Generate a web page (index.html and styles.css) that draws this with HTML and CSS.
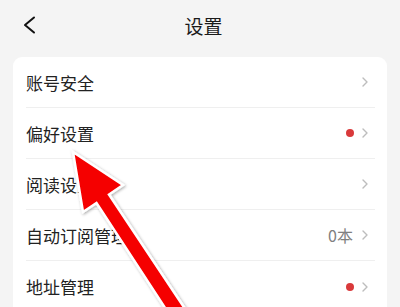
FILE: index.html
```html
<!DOCTYPE html>
<html lang="zh">
<head>
<meta charset="utf-8">
<link rel="stylesheet" href="styles.css">
</head>
<body>
<div class="page">
  <header class="header">
    <span class="back">
      <svg width="13" height="18" viewBox="0 0 13 18"><polyline points="11,1.5 2,9 11,16.5" fill="none" stroke="#111" stroke-width="2" stroke-linecap="round" stroke-linejoin="round"/></svg>
    </span>
    <h1 class="title">设置</h1>
    <span></span>
  </header>
  <section class="card">
    <div class="row"><span class="label">账号安全</span><span class="right"><svg class="chev" width="6" height="10" viewBox="0 0 6 10"><polyline points="1,1 5,5 1,9" fill="none" stroke="#bdbdbd" stroke-width="1.4" stroke-linecap="round" stroke-linejoin="round"/></svg></span></div>
    <div class="row"><span class="label">偏好设置</span><span class="right"><span class="dot"></span><svg class="chev" width="6" height="10" viewBox="0 0 6 10"><polyline points="1,1 5,5 1,9" fill="none" stroke="#bdbdbd" stroke-width="1.4" stroke-linecap="round" stroke-linejoin="round"/></svg></span></div>
    <div class="row"><span class="label">阅读设置</span><span class="right"><svg class="chev" width="6" height="10" viewBox="0 0 6 10"><polyline points="1,1 5,5 1,9" fill="none" stroke="#bdbdbd" stroke-width="1.4" stroke-linecap="round" stroke-linejoin="round"/></svg></span></div>
    <div class="row"><span class="label">自动订阅管理</span><span class="right"><span class="count">0本</span><svg class="chev" width="6" height="10" viewBox="0 0 6 10"><polyline points="1,1 5,5 1,9" fill="none" stroke="#bdbdbd" stroke-width="1.4" stroke-linecap="round" stroke-linejoin="round"/></svg></span></div>
    <div class="row"><span class="label">地址管理</span><span class="right"><span class="dot"></span><svg class="chev" width="6" height="10" viewBox="0 0 6 10"><polyline points="1,1 5,5 1,9" fill="none" stroke="#bdbdbd" stroke-width="1.4" stroke-linecap="round" stroke-linejoin="round"/></svg></span></div>
  </section>
  <svg class="arrow" width="400" height="307" viewBox="0 0 400 307">
    <defs>
      <filter id="sh" x="-20%" y="-20%" width="140%" height="140%">
        <feDropShadow dx="1" dy="1" stdDeviation="1.5" flood-color="#000" flood-opacity="0.35"/>
      </filter>
    </defs>
    <polygon points="73,152 123,185 109,194.5 184.5,308 171,317 96.5,203 83,212" fill="#f50000" stroke="#fff" stroke-width="2.5" stroke-linejoin="miter" filter="url(#sh)"/>
  </svg>
</div>
</body>
</html>
```

FILE: styles.css
```css
* { box-sizing: border-box; }
html, body { margin: 0; padding: 0; }
body {
  background: #f4f4f4;
  font-family: "Noto Sans CJK SC", "Noto Sans", sans-serif;
  color: #222;
  width: 400px;
  height: 307px;
  overflow: hidden;
}
.page { position: relative; height: 307px; overflow: hidden; }
.header {
  height: 50px;
  display: grid;
  grid-template-columns: 1fr auto 1fr;
  align-items: center;
  padding: 0 16px 0 23px;
}
.back { display: flex; align-items: center; height: 18px; }
.back svg { display: block; }
.title {
  margin: 0;
  font-size: 19px;
  font-weight: 400;
  color: #1a1a1a;
  line-height: 1;
}
.card {
  margin: 7px 13px 0 13px;
  background: #fff;
  border-radius: 9px;
  height: 260px;
}
.row {
  margin: 0 12px 0 13px;
  height: 51px;
  border-bottom: 1px solid #efefef;
  display: flex;
  align-items: center;
  justify-content: space-between;
  padding-right: 7px;
}
.row:last-child { border-bottom: none; }
.label { font-size: 17px; line-height: 1; color: #222; }
.right { display: flex; align-items: center; gap: 8px; }
.chev { display: block; }
.dot { width: 8px; height: 8px; border-radius: 50%; background: #d9393b; }
.count { font-size: 16px; color: #808080; line-height: 1; margin-right: 1px; }
.arrow { position: absolute; left: 0; top: 0; pointer-events: none; }
```
